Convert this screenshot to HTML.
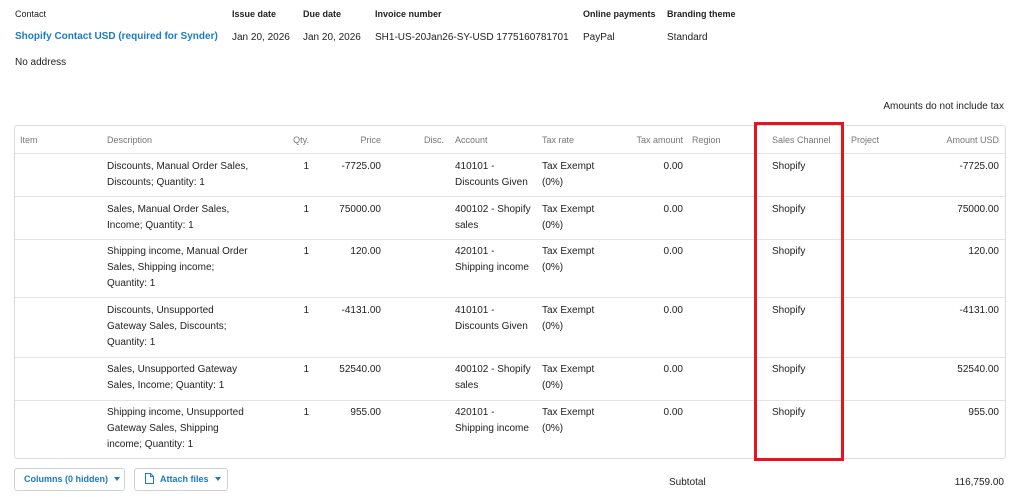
<!DOCTYPE html>
<html><head><meta charset="utf-8"><style>
*{margin:0;padding:0;box-sizing:border-box}
body{width:1024px;height:497px;background:#fff;font-family:"Liberation Sans",Arial,sans-serif;font-size:10px;color:#222;position:relative;overflow:hidden}
.a{position:absolute;white-space:nowrap;line-height:16px}
.b{font-weight:bold;font-size:9px}
.h{color:#777;font-size:9px}
.r{text-align:right}
.line{position:absolute;left:15px;width:990px;height:1px;background:#e3e3e3}
.btn{position:absolute;top:468px;height:23px;border:1px solid #cfd3d6;border-radius:3px;color:#1c7bc5;font-weight:bold;font-size:9px;line-height:21px;padding-left:9px;white-space:nowrap}
.car{display:inline-block;width:0;height:0;border-left:3.5px solid transparent;border-right:3.5px solid transparent;border-top:4px solid #1c7bc5;margin-left:6px;vertical-align:1px}
</style></head><body>
<div class="a" style="left:15px;top:6px;font-size:9px">Contact</div>
<div class="a b" style="left:232px;top:6px">Issue date</div>
<div class="a b" style="left:303px;top:6px">Due date</div>
<div class="a b" style="left:375px;top:6px">Invoice number</div>
<div class="a b" style="left:583px;top:6px">Online payments</div>
<div class="a b" style="left:667px;top:6px">Branding theme</div>
<div class="a" style="left:15px;top:29px;color:#1c7bc5;font-weight:bold">Shopify Contact USD (required for Synder)</div>
<div class="a" style="left:232px;top:30px">Jan 20, 2026</div>
<div class="a" style="left:303px;top:30px">Jan 20, 2026</div>
<div class="a" style="left:375px;top:30px">SH1-US-20Jan26-SY-USD 1775160781701</div>
<div class="a" style="left:583px;top:30px">PayPal</div>
<div class="a" style="left:667px;top:30px">Standard</div>
<div class="a" style="left:15px;top:55px">No address</div>
<div class="a r" style="right:20px;top:99px">Amounts do not include tax</div>

<div style="position:absolute;left:14px;top:125px;width:992px;height:334px;border:1px solid #dcdcdc;border-radius:3px"></div>
<div class="line" style="top:153px"></div>
<div class="line" style="top:196px"></div>
<div class="line" style="top:239px"></div>
<div class="line" style="top:297px"></div>
<div class="line" style="top:357px"></div>
<div class="line" style="top:400px"></div>

<div class="a h" style="left:20px;top:132px">Item</div>
<div class="a h" style="left:107px;top:132px">Description</div>
<div class="a h r" style="right:715px;top:132px">Qty.</div>
<div class="a h r" style="right:643px;top:132px">Price</div>
<div class="a h r" style="right:580px;top:132px">Disc.</div>
<div class="a h" style="left:455px;top:132px">Account</div>
<div class="a h" style="left:542px;top:132px">Tax rate</div>
<div class="a h r" style="right:341px;top:132px">Tax amount</div>
<div class="a h" style="left:692px;top:132px">Region</div>
<div class="a h" style="left:772px;top:132px">Sales Channel</div>
<div class="a h" style="left:851px;top:132px">Project</div>
<div class="a h r" style="right:25px;top:132px">Amount USD</div>

<div id="rows"></div>
<script>
var rows=[
[159,"Discounts, Manual Order Sales,<br>Discounts; Quantity: 1","-7725.00","410101 -<br>Discounts Given","-7725.00"],
[202,"Sales, Manual Order Sales,<br>Income; Quantity: 1","75000.00","400102 - Shopify<br>sales","75000.00"],
[244,"Shipping income, Manual Order<br>Sales, Shipping income;<br>Quantity: 1","120.00","420101 -<br>Shipping income","120.00"],
[303,"Discounts, Unsupported<br>Gateway Sales, Discounts;<br>Quantity: 1","-4131.00","410101 -<br>Discounts Given","-4131.00"],
[362,"Sales, Unsupported Gateway<br>Sales, Income; Quantity: 1","52540.00","400102 - Shopify<br>sales","52540.00"],
[405,"Shipping income, Unsupported<br>Gateway Sales, Shipping<br>income; Quantity: 1","955.00","420101 -<br>Shipping income","955.00"]];
var h="";
rows.forEach(function(r){var t=r[0];
h+='<div class="a" style="left:107px;top:'+t+'px">'+r[1]+'</div>';
h+='<div class="a r" style="right:715px;top:'+t+'px">1</div>';
h+='<div class="a r" style="right:643px;top:'+t+'px">'+r[2]+'</div>';
h+='<div class="a" style="left:455px;top:'+t+'px">'+r[3]+'</div>';
h+='<div class="a" style="left:542px;top:'+t+'px">Tax Exempt<br>(0%)</div>';
h+='<div class="a r" style="right:341px;top:'+t+'px">0.00</div>';
h+='<div class="a" style="left:772px;top:'+t+'px">Shopify</div>';
h+='<div class="a r" style="right:25px;top:'+t+'px">'+r[4]+'</div>';});
document.getElementById("rows").innerHTML=h;
</script>
<div style="position:absolute;left:754px;top:122px;width:90px;height:339px;border:3px solid #e8141c"></div>

<div class="btn" style="left:14px;width:111px">Columns (0 hidden)<span class="car"></span></div>
<div class="btn" style="left:134px;width:94px;padding-left:10px"><svg width="9" height="11" viewBox="0 0 9 11" style="vertical-align:-2px;margin-right:6px"><path d="M0.5 0.5H5.5L8.5 3.5V10.5H0.5Z M5.5 0.5V3.5H8.5" fill="none" stroke="#1c7bc5" stroke-width="1"/></svg>Attach files<span class="car"></span></div>
<div class="a" style="left:669px;top:475px">Subtotal</div>
<div class="a r" style="right:20px;top:475px">116,759.00</div>
</body></html>
